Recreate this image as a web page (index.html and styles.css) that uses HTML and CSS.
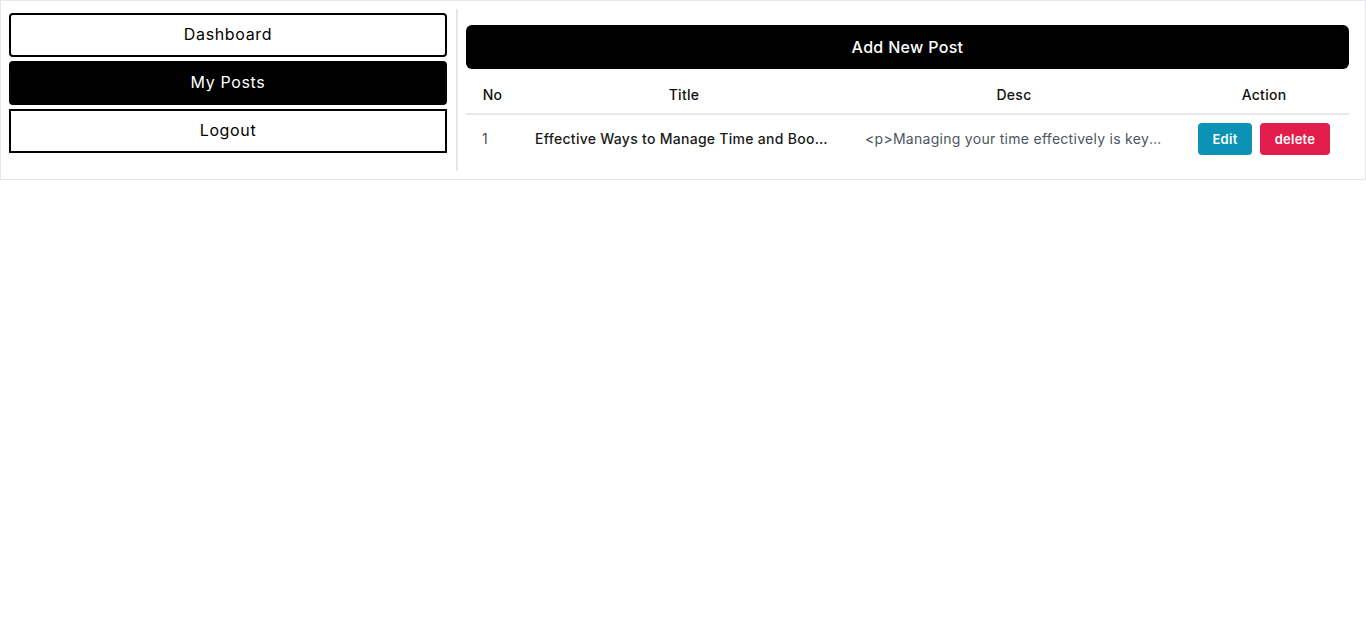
FILE: index.html
```html
<!DOCTYPE html>
<html lang="en">
<head>
<meta charset="utf-8">
<title>My Posts</title>
<link rel="stylesheet" href="styles.css">
</head>
<body>
<div class="panel">
  <aside class="sidebar">
    <a class="nav-btn" href="#">Dashboard</a>
    <a class="nav-btn active" href="#">My Posts</a>
    <a class="nav-btn square" href="#">Logout</a>
  </aside>
  <main class="content">
    <button class="add-btn">Add New Post</button>
    <table class="posts">
      <colgroup>
        <col class="c-no"><col class="c-title"><col class="c-desc"><col class="c-action">
      </colgroup>
      <thead>
        <tr><th>No</th><th>Title</th><th>Desc</th><th>Action</th></tr>
      </thead>
      <tbody>
        <tr>
          <td class="no">1</td>
          <td class="title"><span class="clip">Effective Ways to Manage Time and Boost Productivity</span></td>
          <td class="desc"><span class="clip">&lt;p&gt;Managing your time effectively is key to boosting productivity.&lt;/p&gt;</span></td>
          <td class="action"><div class="actions"><button class="btn edit">Edit</button><button class="btn del">delete</button></div></td>
        </tr>
      </tbody>
    </table>
  </main>
</div>
</body>
</html>
```
FILE: styles.css
```css
* { box-sizing: border-box; }
html, body { margin: 0; padding: 0; background: #fff; }
body {
  font-family: Inter, "Open Sans", "Liberation Sans", sans-serif;
  color: #000;
  letter-spacing: 0.04em;
}

.panel {
  display: flex;
  border: 1px solid #e5e7eb;
  padding: 8px;
}

.sidebar {
  width: 449px;
  flex: none;
  display: flex;
  flex-direction: column;
  gap: 4px;
  padding: 4px 9px 0 0;
  border-right: 2px solid #e5e7eb;
}

.nav-btn {
  display: block;
  height: 44px;
  border: 2px solid #000;
  border-radius: 4px;
  text-align: center;
  font-size: 16px;
  line-height: 38px;
  padding-bottom: 2px;
  color: #000;
  text-decoration: none;
  background: #fff;
}
.nav-btn.active { background: #000; color: #fff; }
.nav-btn.square { border-radius: 0; }

.content {
  flex: 1;
  min-width: 0;
  padding: 16px 8px 8px 8px;
}

.add-btn {
  display: block;
  width: 100%;
  height: 44px;
  border: 0;
  border-radius: 6px;
  background: #000;
  color: #fff;
  font-family: inherit;
  font-size: 16px;
  font-weight: 500;
  letter-spacing: 0.02em;
  padding-bottom: 2px;
  cursor: pointer;
}

.posts {
  width: 100%;
  margin-top: 8px;
  border-collapse: collapse;
  table-layout: fixed;
  font-size: 14px;
  letter-spacing: 0.02em;
}
.c-no { width: 53px; }
.c-title { width: 330px; }
.c-desc { width: 330px; }
.c-action { width: 170px; }

.posts th {
  font-weight: 500;
  text-align: center;
  padding: 8px 0;
  line-height: 20px;
  color: #111;
  border-bottom: 2px solid #e5e7eb;
}
.posts td {
  padding: 8px 16px;
  height: 48px;
  line-height: 20px;
  vertical-align: middle;
}
.posts td.no { color: #4b4b4b; }
.posts td.title { font-weight: 500; color: #1a1a1a; }
.posts td.desc { color: #4b5563; }
.clip {
  display: block;
  white-space: nowrap;
  overflow: hidden;
  text-overflow: ellipsis;
}
.posts td.action { padding: 8px 0; }
.actions {
  display: flex;
  justify-content: center;
  gap: 8px;
}

.btn {
  height: 32px;
  padding: 0;
  border: 0;
  border-radius: 4px;
  color: #fff;
  font-family: inherit;
  font-size: 13px;
  font-weight: 600;
  letter-spacing: 0.02em;
  line-height: 32px;
  cursor: pointer;
}
.btn.edit { width: 54px; background: #0b92b4; }
.btn.del { width: 70px; background: #e21d4b; }
```
